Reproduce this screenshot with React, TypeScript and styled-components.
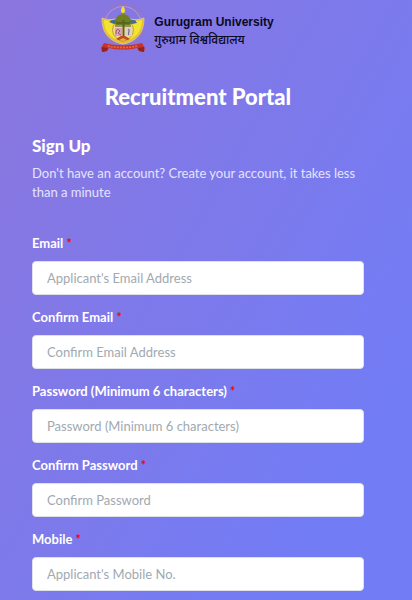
import React, { useId } from "react";
import styled, { createGlobalStyle } from "styled-components";

const GlobalStyle = createGlobalStyle`
  *, *::before, *::after { box-sizing: border-box; }
  body {
    margin: 0;
    color: #fff;
    font-family: Lato, "Noto Sans", sans-serif;
    font-size: 13px;
    line-height: 19px;
  }
`;

const Page = styled.main`
  min-height: 100vh;
  padding: 2px 48px 8px 32px;
  background: linear-gradient(120deg, #8b76de 0, #727cf5 540px);
`;

const Brand = styled.a`
  display: flex;
  align-items: center;
  justify-content: center;
  gap: 8px;
  padding-right: 22px;
  color: #0b0922;
  text-decoration: none;
`;

const Crest = styled.svg`
  flex: none;
  width: 46px;
  height: 58px;
`;

const BrandText = styled.span`
  display: flex;
  flex-direction: column;
  font-family: "Liberation Sans", "Noto Sans Devanagari", "Noto Sans", sans-serif;
  font-size: 12px;
  font-weight: 700;
  line-height: 18px;
  white-space: nowrap;
`;

const HindiName = styled.span`
  font-size: 12px;
  font-weight: 500;
`;

const Title = styled.h1`
  margin: 22px 0 24px;
  font-size: 22px;
  line-height: 30px;
  font-weight: 900;
  text-align: center;
`;

const Subtitle = styled.h2`
  margin: 0 0 8px;
  font-size: 17px;
  line-height: 20px;
  font-weight: 900;
`;

const Intro = styled.p`
  margin: 0 0 32px;
  color: #e3e4fd;
`;

const Form = styled.form`
  display: flex;
  flex-direction: column;
  gap: 13px;
`;

const Field = styled.div`
  display: flex;
  flex-direction: column;
  gap: 8px;
`;

const Label = styled.label`
  font-weight: 700;
`;

const Required = styled.span`
  color: #f00;
`;

const Input = styled.input`
  width: 100%;
  height: 34px;
  padding: 0 14px;
  border: 1px solid #dee2e6;
  border-radius: 4px;
  background: #fff;
  color: #6c757d;
  font: inherit;

  &::placeholder {
    color: #a1a9b1;
    opacity: 1;
  }
`;

const fields = [
  { label: "Email", type: "email", placeholder: "Applicant's Email Address" },
  { label: "Confirm Email", type: "email", placeholder: "Confirm Email Address" },
  { label: "Password (Minimum 6 characters)", type: "password", placeholder: "Password (Minimum 6 characters)" },
  { label: "Confirm Password", type: "password", placeholder: "Confirm Password" },
  { label: "Mobile", type: "tel", placeholder: "Applicant's Mobile No." },
];

function UniversityCrest() {
  return (
    <Crest viewBox="0 1 46 58" aria-hidden="true">
      <circle cx="23" cy="24" r="20.5" fill="none" stroke="#a278ae" strokeWidth="1.6" strokeDasharray="2 1" />
      <circle cx="23" cy="24" r="18.5" fill="none" stroke="#b7a5cd" strokeWidth="0.8" />
      <path d="M2 17c5 2 9 2 13 1l8 4 8-4c4 1 8 1 13-1 0 13-5 22-20 26h-2C7 39 2 30 2 17Z" fill="#e3c02e" stroke="#d8c8a0" strokeWidth="0.8" />
      <path d="M4 19c4 1 7 1 10 0l9 5 9-5c3 1 6 1 10 0 0 11-5 18-19 22C9 37 4 30 4 19Z" fill="#f2e432" />
      <circle cx="23" cy="29" r="10.5" fill="#eed88b" stroke="#b5922b" strokeWidth="0.8" />
      <path d="M23 5c-2 3-3 5-1 7h2c2-2 1-4-1-7Z" fill="#f5de36" />
      <path d="M21 12h4v4h-4z" fill="#78901f" />
      <path d="M16 18c1-4 4-5 7-4 3-1 6 0 7 4l5 2-5 4H16l-5-4 5-2Z" fill="#71801f" />
      <path d="M12 19l5 1-3 3-5-2zm17 1 6-1 2 3-5 1z" fill="#426b91" />
      <path d="M16 22h14M15 25h16" stroke="#40521f" strokeWidth="1.2" />
      <path d="M15 27h7v8h-7z" fill="#dc9db8" />
      <path d="M25 27h7v8h-7z" fill="#dfcfc4" />
      <path d="M16 33v-3l2-2 2 2-2 2 3 2" fill="none" stroke="#9c5b7f" />
      <path d="M28 28c3 1-1 4 1 6" fill="none" stroke="#716c8e" strokeWidth="1.2" />
      <path d="M22.5 19h2v18h-2z" fill="#566226" />
      <path d="M16 38l5-3h4l5 3-7 3Z" fill="#bd4a26" />
      <path d="M19 39l4-2 4 2-4 2Z" fill="#e7ac36" />
      <path d="M4 42c12 3 26 3 38 0l3 5-1 4-5-1-2-3c-9 2-19 2-28 0l-2 3-5 1-1-4 3-5Z" fill="#c93226" />
      <path d="M2 46l6 1-1 3-5 1zm42 0-6 1 1 3 5 1z" fill="#96221e" />
      <path d="M8 45c9 2 21 2 30 0" fill="none" stroke="#e0693f" strokeWidth="1.8" strokeDasharray="2 1" />
    </Crest>
  );
}

function FormField({ label, type, placeholder }: (typeof fields)[number]) {
  const id = useId();
  return (
    <Field>
      <Label htmlFor={id}>
        {label} <Required>*</Required>
      </Label>
      <Input id={id} type={type} placeholder={placeholder} required />
    </Field>
  );
}

export default function App() {
  return (
    <>
      <GlobalStyle />
      <Page>
        <Brand href="#">
          <UniversityCrest />
          <BrandText>
            <span>Gurugram University</span>
            <HindiName lang="hi">गुरुग्राम विश्वविद्यालय</HindiName>
          </BrandText>
        </Brand>
        <Title>Recruitment Portal</Title>
        <Subtitle>Sign Up</Subtitle>
        <Intro>Don't have an account? Create your account, it takes less than a minute</Intro>
        <Form>
          {fields.map((field) => (
            <FormField key={field.label} {...field} />
          ))}
        </Form>
      </Page>
    </>
  );
}
